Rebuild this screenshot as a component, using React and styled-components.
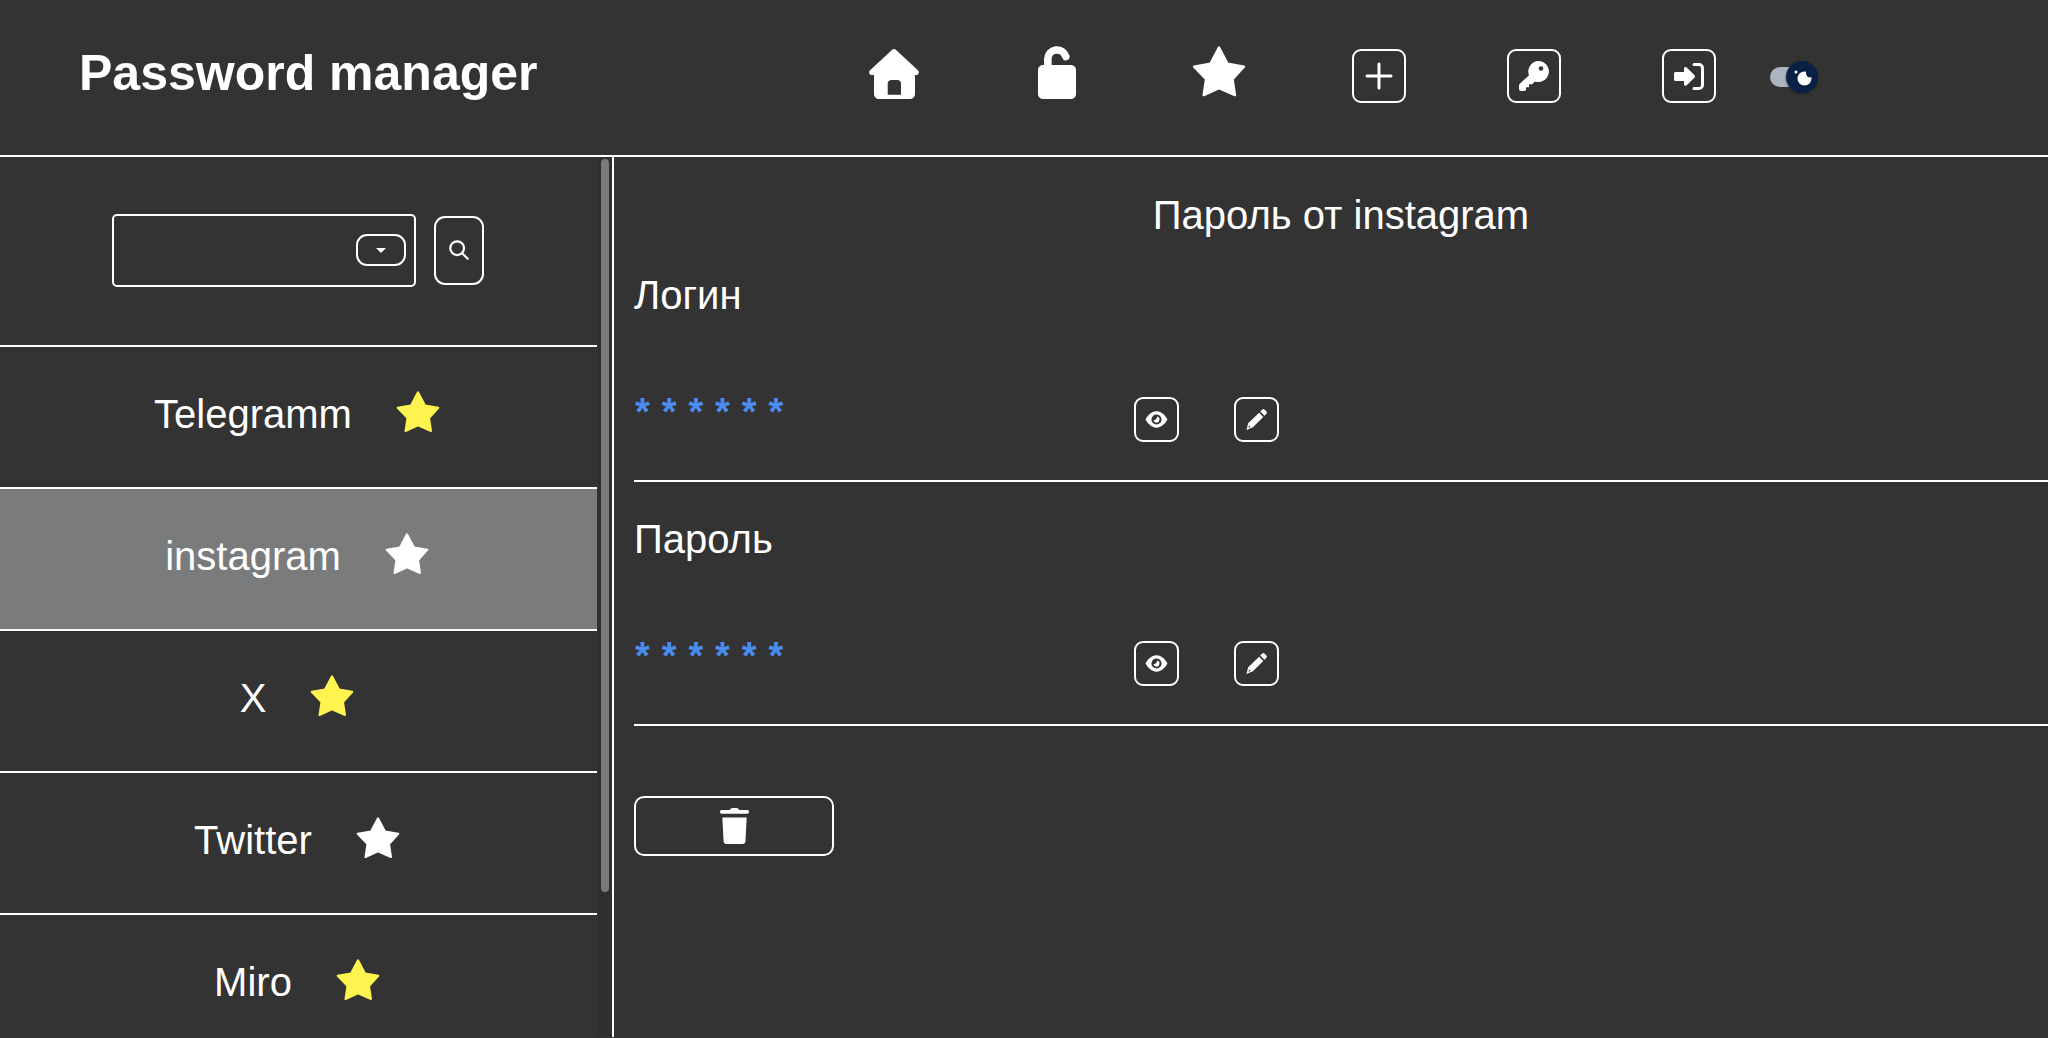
import React from "react";
import styled, { createGlobalStyle } from "styled-components";

const Global = createGlobalStyle`
  html, body { margin: 0; padding: 0; height: 100%; overflow: hidden; background: #333333; }
  body { font-family: "Liberation Sans", Arial, sans-serif; color: #fff; }
`;

const Page = styled.div`
  width: 2048px;
  height: 1038px;
  box-sizing: border-box;
  padding-bottom: 1px;
  display: flex;
  flex-direction: column;
  background: #333333;
  overflow: hidden;
`;

const Header = styled.header`
  height: 155px;
  flex: none;
  border-bottom: 2px solid #fff;
  display: flex;
  align-items: center;
`;

const Title = styled.h1`
  margin: 0 0 10px 79px;
  width: 790px;
  flex: none;
  font-size: 50px;
  font-weight: 700;
  line-height: 1;
`;

const Nav = styled.nav`
  display: flex;
  align-items: center;
  height: 54px;
  margin-bottom: 3px;
`;

const NavSlot = styled.div`
  width: ${(p) => p.$w}px;
  flex: none;
  display: flex;
  align-items: center;
  color: #fff;
  svg {
    display: block;
    margin-bottom: ${(p) => p.$lift || 0}px;
  }
`;

const NavBox = styled.div`
  width: 54px;
  height: 54px;
  box-sizing: border-box;
  border: 2px solid #fff;
  border-radius: 9px;
  display: flex;
  align-items: center;
  justify-content: center;
`;

const Toggle = styled.div`
  width: 40px;
  height: 20px;
  background: #adb5c2;
  border-radius: 10px;
  position: relative;
  margin-top: 2px;
`;

const Knob = styled.div`
  position: absolute;
  right: -8px;
  top: -6px;
  width: 32px;
  height: 32px;
  border-radius: 50%;
  background: #0a2044;
  box-shadow: 0 1px 3px rgba(0, 0, 0, 0.4);
`;

const Body = styled.main`
  flex: 1;
  display: flex;
  min-height: 0;
`;

const Sidebar = styled.aside`
  width: 612px;
  flex: none;
  display: flex;
  border-right: 2px solid #fff;
  overflow: hidden;
`;

const SideList = styled.div`
  width: 597px;
  flex: none;
`;

const Track = styled.div`
  width: 14px;
  margin-left: 1px;
  background: #2f2f2f;
  display: flex;
  justify-content: center;
  flex: none;
`;

const Thumb = styled.div`
  width: 8px;
  height: 733px;
  margin-top: 2px;
  border-radius: 4px;
  background: #7a7a7a;
`;

const SearchBar = styled.div`
  height: 190px;
  box-sizing: border-box;
  border-bottom: 2px solid #fff;
  display: flex;
  align-items: center;
  padding: 0 0 2px 112px;
  gap: 18px;
`;

const Select = styled.div`
  width: 304px;
  height: 73px;
  box-sizing: border-box;
  border: 2px solid #fff;
  border-radius: 5px;
  display: flex;
  align-items: center;
  justify-content: flex-end;
  padding-right: 8px;
`;

const SelectBtn = styled.div`
  width: 50px;
  height: 32px;
  box-sizing: border-box;
  border: 2px solid #fff;
  border-radius: 11px;
  display: flex;
  align-items: center;
  justify-content: center;
`;

const Caret = styled.div`
  width: 0;
  height: 0;
  border-left: 5px solid transparent;
  border-right: 5px solid transparent;
  border-top: 5px solid #fff;
`;

const SearchBtn = styled.div`
  width: 50px;
  height: 69px;
  box-sizing: border-box;
  border: 2px solid #fff;
  border-radius: 11px;
  display: flex;
  align-items: center;
  justify-content: center;
`;

const Row = styled.div`
  height: 142px;
  box-sizing: border-box;
  border-bottom: 2px solid #fff;
  display: grid;
  grid-template-columns: 1fr auto 1fr;
  column-gap: 44px;
  align-items: center;
  font-size: 40px;
  padding: 0 91px 6px 0;
  background: ${(p) => (p.$active ? "#7a7b7d" : "transparent")};
`;

const RowName = styled.span`
  grid-column: 2;
`;

const RowStar = styled.span`
  grid-column: 3;
  display: flex;
  margin-bottom: 4px;
`;

const Content = styled.section`
  flex: 1;
  padding-left: 20px;
  min-width: 0;
`;

const ContentTitle = styled.h2`
  margin: 0;
  padding-top: 35px;
  font-size: 40px;
  font-weight: 400;
  line-height: 46px;
  text-align: center;
  width: 1414px;
`;

const Field = styled.div`
  border-bottom: 2px solid #fff;
  height: 244px;
  box-sizing: border-box;
  display: flex;
  flex-direction: column;
`;

const FieldLabel = styled.div`
  font-size: 40px;
  line-height: 46px;
  margin-top: 34px;
`;

const FieldRow = styled.div`
  display: flex;
  align-items: flex-start;
  margin-top: 79px;
`;

const Stars = styled.div`
  width: 500px;
  height: 38px;
  flex: none;
  color: #4a8cf0;
  font-size: 38px;
  font-weight: 700;
  letter-spacing: 11.9px;
  line-height: 38px;
  margin-top: -4px;
  padding-left: 1px;
  box-sizing: border-box;
`;

const SmallBtn = styled.div`
  width: 45px;
  height: 45px;
  box-sizing: border-box;
  border: 2px solid #fff;
  border-radius: 9px;
  display: flex;
  align-items: center;
  justify-content: center;
  margin-right: 55px;
  flex: none;
`;

const DeleteBtn = styled.div`
  width: 200px;
  height: 60px;
  box-sizing: border-box;
  margin-top: 70px;
  border: 2px solid #fff;
  border-radius: 10px;
  display: flex;
  align-items: center;
  justify-content: center;
`;

const Star = ({ size = 44, color = "#fff" }) => (
  <svg width={size} height={(size * 42) / 44} viewBox="0 0 44 42" fill={color} stroke={color} strokeWidth="2" strokeLinejoin="round">
    <path d="M22 1.300L29 14.500L42.300 16.800L33 27L35 40L22 34.300L9.500 40L11.500 27L1.700 16.800L15 14.500Z" />
  </svg>
);

const items = [
  { name: "Telegramm", fav: true },
  { name: "instagram", active: true },
  { name: "X", fav: true },
  { name: "Twitter" },
  { name: "Miro", fav: true },
];

const Eye = () => (
  <svg width="23" height="23" viewBox="0 0 24 24">
    <path fill="#fff" fillRule="evenodd" d="M12 3.500C6.500 3.500 2.400 8.500.6 12c1.800 3.500 5.900 8.500 11.400 8.500s9.600-5 11.400-8.500C21.600 8.500 17.500 3.500 12 3.500zm0 3.200a5.300 5.300 0 1 1 0 10.600 5.300 5.300 0 0 1 0-10.600z" />
    <path fill="#fff" d="M12.800 8.800a3.300 3.300 0 1 1-4.100 3.900c1.900.3 3.900-1.800 4.100-3.900z" />
  </svg>
);

const Pencil = () => (
  <svg width="23" height="23" viewBox="0 0 24 24" fill="#fff">
    <path d="M17.800 1.800a2 2 0 0 1 2.800 0l1.600 1.600a2 2 0 0 1 0 2.800l-1.900 1.900-4.400-4.400zM14.700 4.900l4.400 4.400L8.200 20.200 1.500 23l1.800-7z" />
    <path fill="#333333" d="M4.300 18.300l1.500 1.500-2.300.8z" />
  </svg>
);

const Field1 = ({ label }) => (
  <Field>
    <FieldLabel>{label}</FieldLabel>
    <FieldRow>
      <Stars>******</Stars>
      <SmallBtn><Eye /></SmallBtn>
      <SmallBtn><Pencil /></SmallBtn>
    </FieldRow>
  </Field>
);

export default function App() {
  return (
    <Page>
      <Global />
      <Header>
        <Title>Password manager</Title>
        <Nav>
          <NavSlot $w={169} $lift={4}>
            <svg width="50" height="50" viewBox="0 0 50 50" fill="#fff">
              <path fillRule="evenodd" d="M25 0c.8 0 1.500.3 2.100.9L49.200 21.500c1.300 1.300.5 4.500-1.500 4.500H46v19c0 2.800-2.200 5-5 5H10c-2.800 0-5-2.200-5-5V26H2.300c-2 0-2.800-3.200-1.500-4.500L22.900.9C23.500.3 24.200 0 25 0zM22.500 31c-2.300 0-3.800 1.600-3.800 3.800v10.900H32V34.800c0-2.200-1.500-3.800-3.800-3.800z" />
            </svg>
          </NavSlot>
          <NavSlot $w={154} $lift={7}>
            <svg width="38" height="53" viewBox="0 0 38 53" fill="#fff">
              <path d="M5 19h28c2.800 0 5 2.200 5 5v24c0 2.800-2.200 5-5 5H5c-2.800 0-5-2.200-5-5V24c0-2.800 2.200-5 5-5z" />
              <path fill="none" stroke="#fff" strokeWidth="7.600" strokeLinecap="round" d="M9.800 22V13a9.200 9.200 0 0 1 18-2.500" />
            </svg>
          </NavSlot>
          <NavSlot $w={160} $lift={9}>
            <Star size={54} />
          </NavSlot>
          <NavSlot $w={155}>
            <NavBox>
              <svg width="28" height="28" viewBox="0 0 28 28" stroke="#fff" strokeWidth="3" strokeLinecap="round"><path d="M14 2v24M2 14h24" /></svg>
            </NavBox>
          </NavSlot>
          <NavSlot $w={155}>
            <NavBox>
              <svg width="32" height="32" viewBox="0 0 32 32" fill="#fff">
                <path fillRule="evenodd" d="M20.500 1a10.500 10.500 0 1 1-3.600 20.400L14 24.300h-3v3H8v2.700l-1.500 1H3c-1.100 0-2-.9-2-2v-3.500c0-.6.200-1.100.6-1.500L11 15.300A10.500 10.500 0 0 1 20.500 1zm2.500 5.200a2.300 2.300 0 1 0 0 4.600 2.300 2.300 0 0 0 0-4.600z" />
              </svg>
            </NavBox>
          </NavSlot>
          <NavSlot $w={108}>
            <NavBox>
              <svg width="30" height="27" viewBox="0 0 30 27">
                <path fill="#fff" d="M1.500 9H10V5.500c0-1.300 1.400-2 2.400-1.200l8 7.700c.8.800.8 2 0 2.800l-8 7.700c-1 .8-2.400.1-2.400-1.200V18H1.500C.7 18 0 17.300 0 16.500v-6C0 9.700.7 9 1.500 9z" />
                <path fill="none" stroke="#fff" strokeWidth="3" strokeLinecap="round" d="M20 1.500h5a3.500 3.500 0 0 1 3.500 3.500v17a3.500 3.500 0 0 1-3.500 3.500h-5" />
              </svg>
            </NavBox>
          </NavSlot>
          <Toggle>
            <Knob>
              <svg width="32" height="32" viewBox="0 0 32 32">
                <circle cx="18.500" cy="17.500" r="7" fill="#fff" />
                <circle cx="24.500" cy="12" r="4.500" fill="#0a2044" />
                <circle cx="10" cy="11" r="1.500" fill="#fff" />
              </svg>
            </Knob>
          </Toggle>
        </Nav>
      </Header>
      <Body>
        <Sidebar>
          <SideList>
            <SearchBar>
              <Select><SelectBtn><Caret /></SelectBtn></Select>
              <SearchBtn>
                <svg width="22" height="22" viewBox="0 0 24 24" fill="none" stroke="#fff" strokeWidth="2.400" strokeLinecap="round">
                  <circle cx="10" cy="10" r="7.500" /><path d="M15.500 15.500L21.500 21.500" />
                </svg>
              </SearchBtn>
            </SearchBar>
            {items.map((it) => (
              <Row key={it.name} $active={it.active}>
                <RowName>{it.name}</RowName>
                <RowStar><Star color={it.fav ? "#fff44f" : "#fff"} /></RowStar>
              </Row>
            ))}
          </SideList>
          <Track><Thumb /></Track>
        </Sidebar>
        <Content>
          <ContentTitle>Пароль от instagram</ContentTitle>
          <Field1 label="Логин" />
          <Field1 label="Пароль" />
          <DeleteBtn>
            <svg width="29" height="36" viewBox="0 0 31 36" fill="#fff" preserveAspectRatio="none">
              <path d="M10.500 2c.5-1.300 1.500-2 3-2h4c1.500 0 2.500.7 3 2h8.800c1 0 1.700.7 1.700 1.800s-.7 1.900-1.700 1.900H1.700C.7 5.700 0 4.900 0 3.800S.7 2 1.700 2z" />
              <path d="M2.500 9.500h26l-1.300 23.500c-.1 1.700-1.300 3-3 3H6.800c-1.700 0-2.900-1.300-3-3z" />
            </svg>
          </DeleteBtn>
        </Content>
      </Body>
    </Page>
  );
}
